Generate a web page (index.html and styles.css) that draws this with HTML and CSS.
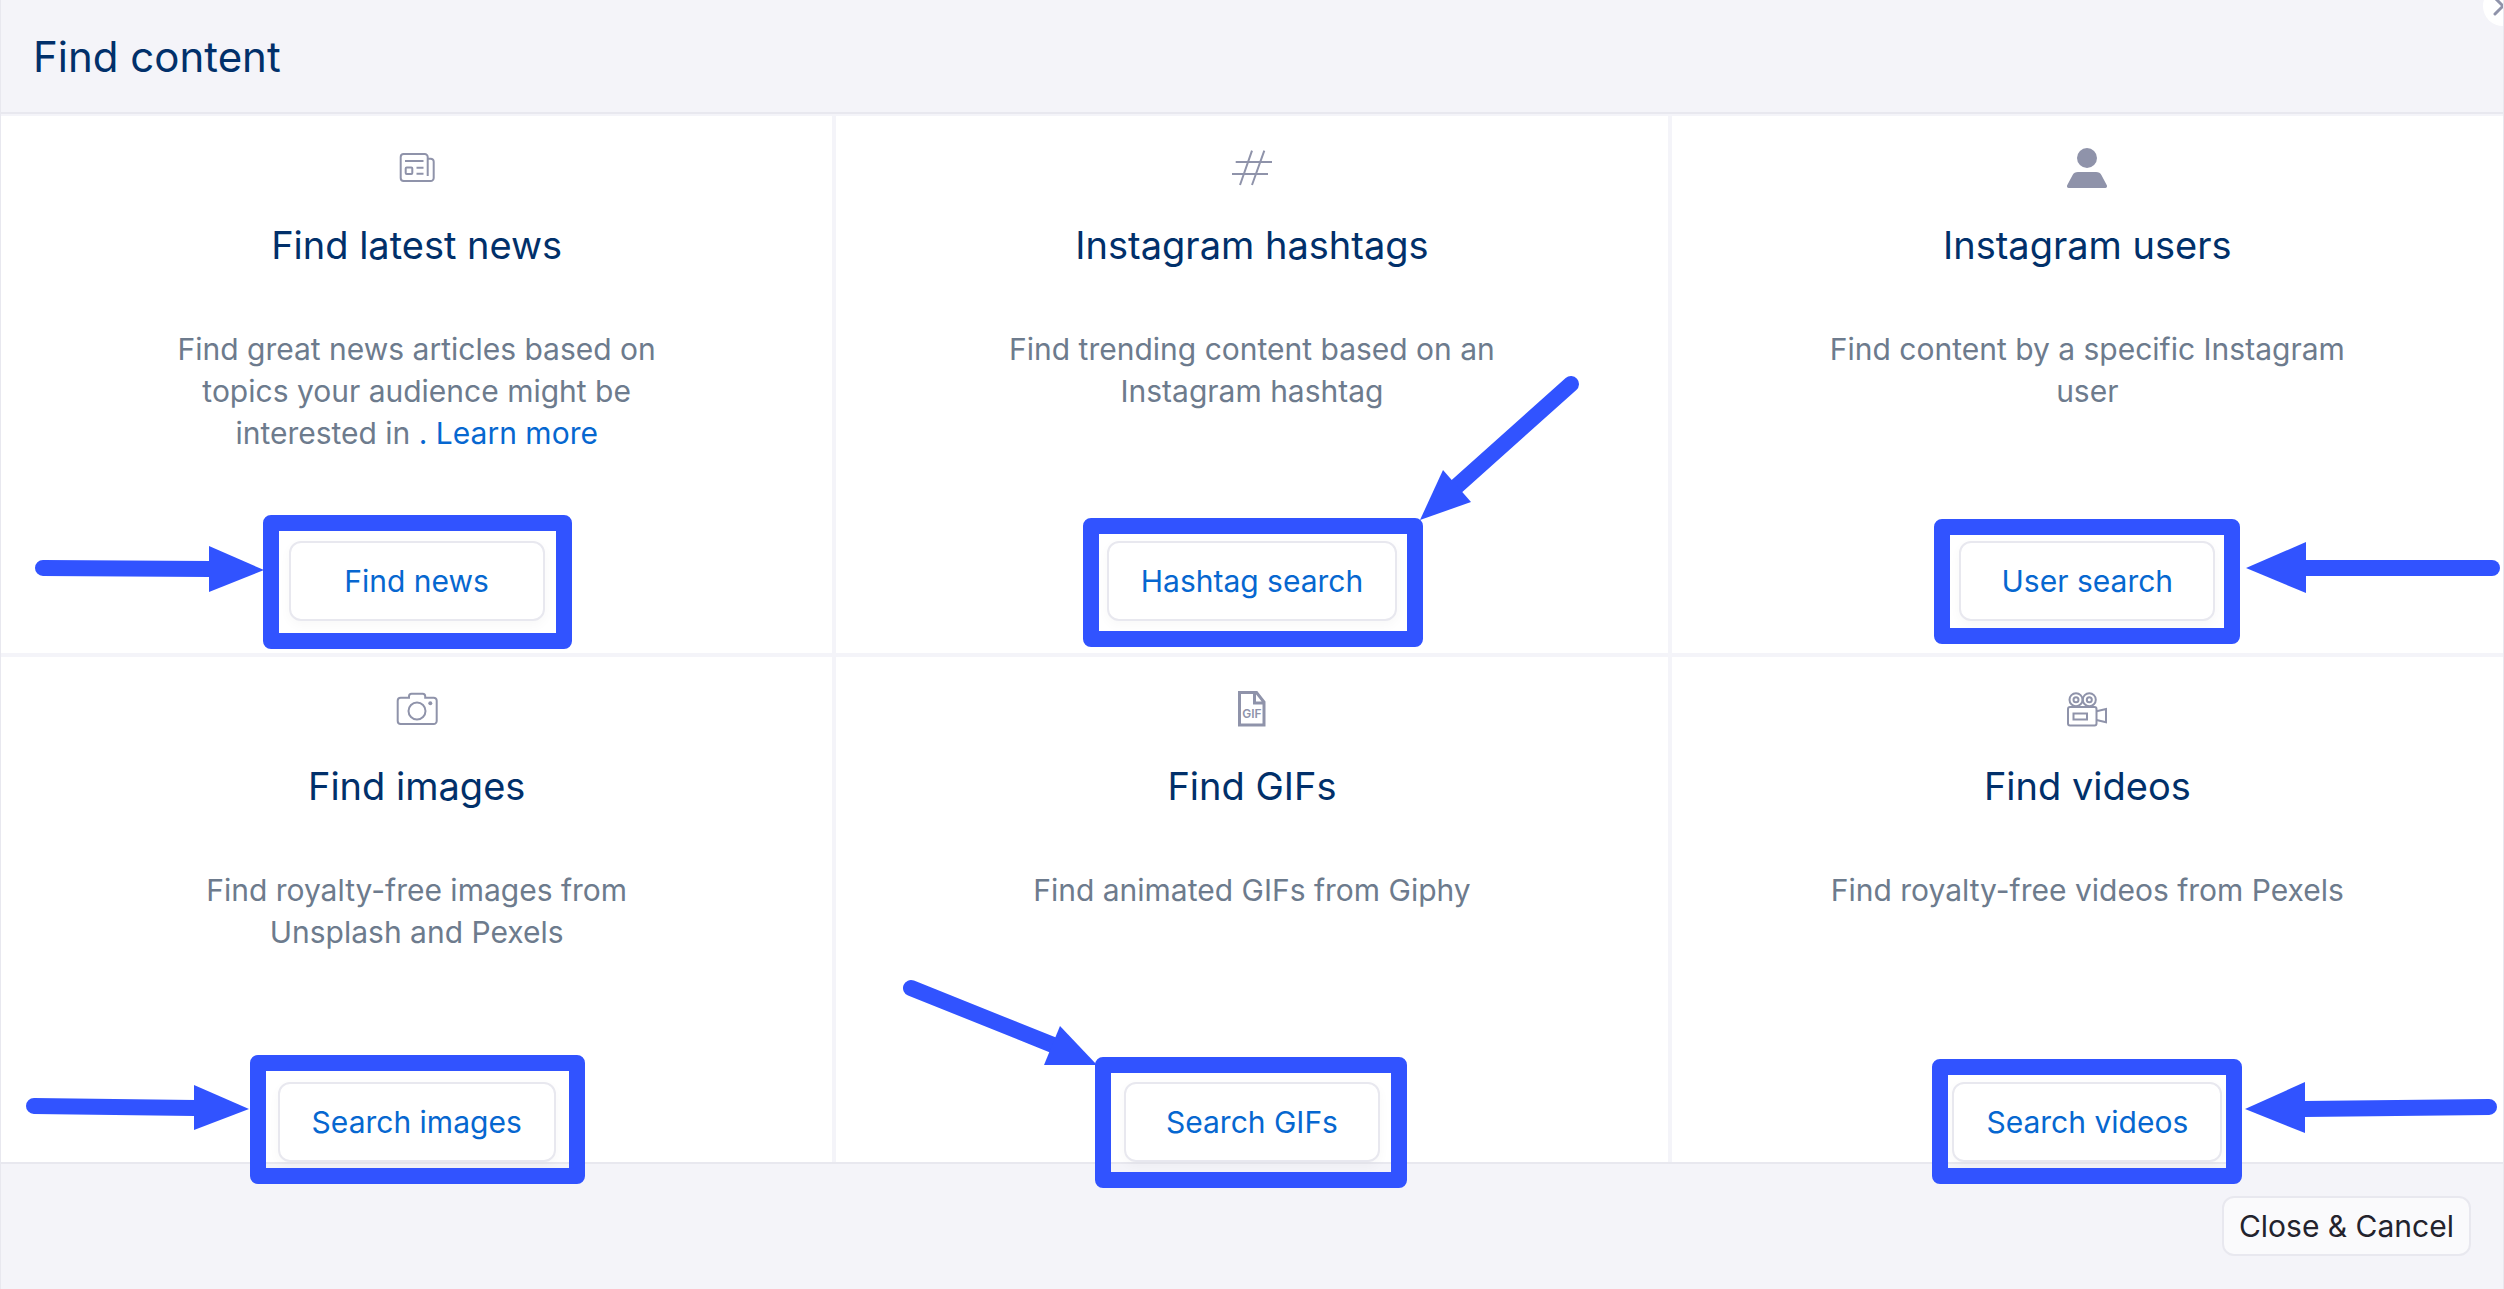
FILE: index.html
```
<!DOCTYPE html>
<html lang="en">

<head>
    <meta charset="UTF-8" />
    <meta name="viewport" content="width=device-width, initial-scale=1.0" />
    <title>Find content</title>
    <link rel="stylesheet" href="styles.css">
</head>

<body>
    <div class="modal">
        <button class="close" aria-label="Close">
            <svg width="20" height="20" viewBox="0 0 20 20">
                <path d="M2 2l16 16M18 2L2 18" />
            </svg>
        </button>

        <header class="modal-header">
            <h1>Find content</h1>
        </header>

        <main class="grid">
            <section class="card">
                <svg class="icon" viewBox="0 0 48 48">
                    <path d="M34.7 32V13a3 3 0 0 0-3-3h-21a3 3 0 0 0-3 3v21a3 3 0 0 0 3 3h27a3 3 0 0 0 3-3V17.700a3 3 0 0 0-3-3h-3" />
                    <path d="M12 17h18.500M23.500 23.700h7M23.500 29.700h7" />
                    <rect x="12.700" y="23.500" width="6.600" height="6.600" rx="1" />
                </svg>
                <h2>Find latest news</h2>
                <p>Find great news articles based on topics your audience might be interested in <a href="#">. Learn more</a></p>
                <div class="action">
                    <button class="btn">Find news</button>
                    <svg class="mark">
                        <rect x="-146" y="-58" width="293" height="118" />
                        <path d="M-374-13L-207-12" />
                        <polygon points="-208,-35 -153,-11 -208,11" />
                    </svg>
                </div>
            </section>

            <section class="card">
                <svg class="icon" viewBox="0 0 48 48">
                    <path d="M7.700 18H44M4 30h36M24 6.700L12 41M36.300 6.700L24 41" />
                </svg>
                <h2>Instagram hashtags</h2>
                <p>Find trending content based on an Instagram hashtag</p>
                <div class="action">
                    <button class="btn">Hashtag search</button>
                    <svg class="mark">
                        <rect x="-161" y="-55" width="324" height="113" />
                        <path d="M319-197L205-95" />
                        <polygon points="168,-61 191,-111 219,-79" />
                    </svg>
                </div>
            </section>

            <section class="card">
                <svg class="icon icon-solid" viewBox="0 0 48 48">
                    <circle cx="24" cy="14" r="10" />
                    <path d="M15 28h18c2.500 0 4.500 1.200 5.500 3.200L43.700 41c.8 1.500.2 3-1.500 3H5.800c-1.700 0-2.300-1.500-1.500-3l5.200-9.800c1-2 3-3.200 5.500-3.200z" />
                </svg>
                <h2>Instagram users</h2>
                <p>Find content by a specific Instagram user</p>
                <div class="action">
                    <button class="btn">User search</button>
                    <svg class="mark">
                        <rect x="-145" y="-54" width="290" height="109" />
                        <path d="M405-13H218" />
                        <polygon points="159,-13 219,-39 219,12" />
                    </svg>
                </div>
            </section>

            <section class="card">
                <svg class="icon" viewBox="0 0 48 48">
                    <path d="M16 12.700v-1.500a2.500 2.500 0 0 1 2.500-2.500h11.200a2.500 2.500 0 0 1 2.500 2.500v1.500h8.500a3 3 0 0 1 3 3V36a3 3 0 0 1-3 3H7.700a3 3 0 0 1-3-3V15.700a3 3 0 0 1 3-3z" />
                    <circle cx="24" cy="26" r="8.500" />
                    <circle class="dot" cx="37.300" cy="18.300" r="2" />
                </svg>
                <h2>Find images</h2>
                <p>Find royalty-free images from Unsplash and Pexels</p>
                <div class="action">
                    <button class="btn">Search images</button>
                    <svg class="mark">
                        <rect x="-159" y="-59" width="319" height="113" />
                        <path d="M-383-16L-222-14" />
                        <polygon points="-168,-13 -223,-37 -223,8" />
                    </svg>
                </div>
            </section>

            <section class="card">
                <svg class="icon icon-gif" viewBox="0 0 48 48">
                    <path d="M11.500 7.500h17l7.500 9.500v23H11.500zM26.500 7.500V18H36" />
                    <text x="24" y="33">GIF</text>
                </svg>
                <h2>Find GIFs</h2>
                <p>Find animated GIFs from Giphy</p>
                <div class="action">
                    <button class="btn">Search GIFs</button>
                    <svg class="mark">
                        <rect x="-149" y="-57" width="296" height="115" />
                        <path d="M-341-134L-199-77" />
                        <polygon points="-155,-57 -192,-96 -208,-57" />
                    </svg>
                </div>
            </section>

            <section class="card">
                <svg class="icon" viewBox="0 0 48 48">
                    <circle cx="13" cy="14.700" r="6.500" />
                    <circle cx="13" cy="14.700" r="2.500" />
                    <circle cx="26.300" cy="14.700" r="6.500" />
                    <circle cx="26.300" cy="14.700" r="2.500" />
                    <rect x="5" y="22" width="28.500" height="18.500" rx="2" />
                    <rect x="10.500" y="28.500" width="13.500" height="6" />
                    <path d="M33.500 26.300l9.500-2.300v13.300l-9.500-2.300" />
                </svg>
                <h2>Find videos</h2>
                <p>Find royalty-free videos from Pexels</p>
                <div class="action">
                    <button class="btn">Search videos</button>
                    <svg class="mark">
                        <rect x="-147" y="-55" width="294" height="109" />
                        <path d="M402-15L217-13" />
                        <polygon points="158,-13 218,-40 218,11" />
                    </svg>
                </div>
            </section>
        </main>

        <footer class="modal-footer">
            <button class="btn-cancel">Close &amp; Cancel</button>
        </footer>
    </div>
</body>

</html>
```

FILE: styles.css
```
* {
    margin: 0;
    padding: 0;
    box-sizing: border-box;
}

body {
    font-family: Inter, "Open Sans", sans-serif;
    background: #f4f4f9;
}

.modal {
    position: relative;
    display: flex;
    flex-direction: column;
    min-height: 100vh;
    border-left: 1px solid #e8e8ef;
    border-right: 1px solid #e8e8ef;
    overflow: hidden;
}

.close {
    position: absolute;
    top: -14px;
    right: -20px;
    width: 40px;
    height: 40px;
    display: flex;
    align-items: center;
    justify-content: center;
    border: none;
    border-radius: 50%;
    background: #fff;
    cursor: pointer;
}

.close svg {
    fill: none;
    stroke: #8f93aa;
    stroke-width: 3;
    stroke-linecap: round;
}

.modal-header {
    height: 114px;
    padding: 0 32px;
    display: flex;
    align-items: center;
    border-bottom: 2px solid #e8e8ef;
}

.modal-header h1 {
    color: #01306a;
    font-size: 42px;
    font-weight: 400;
}

.grid {
    display: grid;
    grid-template-columns: repeat(3, 1fr);
    gap: 4px;
    padding-top: 2px;
}

.card {
    display: flex;
    flex-direction: column;
    align-items: center;
    padding: 28px 32px 32px;
    background: #fff;
    text-align: center;
}

.card:nth-child(n+4) {
    padding-bottom: 0;
}

.card h2 {
    margin: 26px 0 56px;
    color: #01306a;
    font-size: 38px;
    font-weight: 400;
    line-height: 54px;
}

.card p {
    max-width: 524px;
    min-height: 126px;
    margin-bottom: 87px;
    color: #6d7b8d;
    font-size: 30px;
    line-height: 42px;
}

.card a {
    color: #0667d0;
    text-decoration: none;
}

.icon {
    width: 48px;
    height: 48px;
    fill: none;
    stroke: #8f93aa;
    stroke-width: 2;
}

.icon-solid,
.icon .dot {
    fill: #8f93aa;
    stroke: none;
}

.icon-gif {
    stroke-width: 3;
}

.icon-gif text {
    fill: #8f93aa;
    stroke: none;
    font-size: 12px;
    font-weight: 600;
    text-anchor: middle;
}

.action {
    position: relative;
}

.btn {
    display: block;
    min-width: 256px;
    height: 80px;
    padding: 0 32px;
    border: 2px solid #e8e8ef;
    border-radius: 12px;
    background: #fff;
    box-shadow: 0 4px 12px rgba(0, 0, 0, 0.03);
    color: #0667d0;
    font-family: inherit;
    font-size: 30px;
    cursor: pointer;
}

/* origin of the arrows is the middle of the button */
.mark {
    position: absolute;
    top: 50%;
    left: 50%;
    width: 1px;
    height: 1px;
    overflow: visible;
    pointer-events: none;
    fill: none;
    stroke: #3153ff;
    stroke-width: 16;
    stroke-linejoin: round;
}

.mark path {
    stroke-linecap: round;
}

.mark polygon {
    fill: #3153ff;
    stroke: none;
}

.modal-footer {
    flex: 1;
    display: flex;
    align-items: flex-start;
    justify-content: flex-end;
    padding: 32px 32px 30px;
    border-top: 2px solid #e8e8ef;
}

.btn-cancel {
    height: 60px;
    padding: 0 15px;
    border: 2px solid #e8e8ef;
    border-radius: 12px;
    background: #fafafc;
    color: #23232d;
    font-family: inherit;
    font-size: 30px;
    cursor: pointer;
}
```
